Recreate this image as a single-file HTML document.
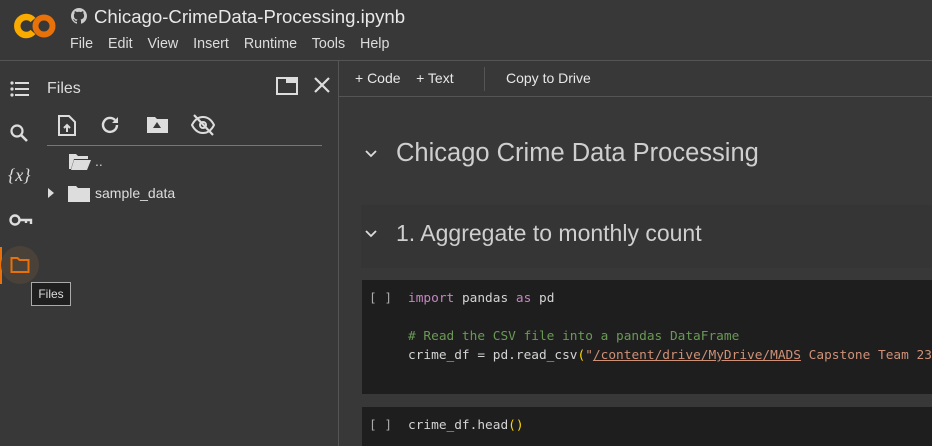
<!DOCTYPE html><html><head><style>
*{margin:0;padding:0;box-sizing:border-box}
body{width:932px;height:446px;overflow:hidden;background:#383838;font-family:"Liberation Sans",sans-serif;color:#e3e3e3;position:relative}
.a{position:absolute}
.mono{font-family:"DejaVu Sans Mono","Liberation Mono",monospace;font-size:12.8px;white-space:pre;color:#d4d4d4}
</style></head><body>
<svg class="a" style="left:13px;top:11px" width="44" height="30" viewBox="0 0 44 30">
<path d="M20 9A9 9 0 1 0 20 21" fill="none" stroke="#f9ab00" stroke-width="6.5"/>
<circle cx="31" cy="15" r="8.5" fill="none" stroke="#e8710a" stroke-width="6"/>
</svg>
<svg class="a" style="left:71px;top:8px" width="16" height="16" viewBox="0 0 16 16"><path fill="#ccc" d="M8 0C3.6 0 0 3.6 0 8c0 3.5 2.3 6.5 5.5 7.6.4.1.5-.2.5-.4v-1.4c-2.2.5-2.7-1-2.7-1-.4-.9-.9-1.2-.9-1.2-.7-.5.1-.5.1-.5.8.1 1.2.8 1.2.8.7 1.3 1.9.9 2.3.7.1-.5.3-.9.5-1.1-1.8-.2-3.6-.9-3.6-4 0-.9.3-1.600.8-2.100-.1-.2-.4-1 .1-2.100 0 0 .7-.2 2.200.8.6-.2 1.300-.3 2-.3s1.400.1 2 .3c1.500-1 2.200-.8 2.200-.8.4 1.100.2 1.900.1 2.100.5.6.8 1.300.8 2.100 0 3.100-1.900 3.700-3.600 4 .3.3.5.8.5 1.500v2.200c0 .2.1.5.6.4C13.700 14.500 16 11.500 16 8c0-4.400-3.600-8-8-8z"/></svg>
<div class="a" style="left:94px;top:6px;font-size:18.6px;color:#e8e8e8">Chicago-CrimeData-Processing.ipynb</div>
<div class="a" style="left:70px;top:36px;font-size:14.3px;color:#ddd;word-spacing:1px">File&nbsp;&nbsp; Edit&nbsp;&nbsp; View&nbsp;&nbsp; Insert&nbsp;&nbsp; Runtime&nbsp;&nbsp; Tools&nbsp;&nbsp; Help</div>
<div class="a" style="left:0;top:60px;width:932px;height:1px;background:#555"></div>
<svg class="a" style="left:10px;top:80px" width="20" height="18" viewBox="0 0 20 18" fill="#ddd"><circle cx="2" cy="3" r="1.6"/><circle cx="2" cy="9" r="1.6"/><circle cx="2" cy="15" r="1.6"/><rect x="5" y="2" width="14" height="2"/><rect x="5" y="8" width="14" height="2"/><rect x="5" y="14" width="14" height="2"/></svg>
<svg class="a" style="left:9px;top:123px" width="20" height="20" viewBox="0 0 20 20"><circle cx="8" cy="8" r="5.5" fill="none" stroke="#ddd" stroke-width="2.2"/><path d="M12 12l6 6" stroke="#ddd" stroke-width="2.6"/></svg>
<div class="a" style="left:8px;top:165px;font-family:'Liberation Serif',serif;font-style:italic;font-size:18px;color:#ddd">{<i>x</i>}</div>
<svg class="a" style="left:9px;top:213px" width="24" height="14" viewBox="0 0 24 14"><circle cx="6" cy="7" r="4.5" fill="none" stroke="#ddd" stroke-width="2.4"/><path d="M10 7h12v4M17 7v3" fill="none" stroke="#ddd" stroke-width="2.4"/></svg>
<div class="a" style="left:0;top:247px;width:2px;height:37px;background:#e8710a"></div>
<div class="a" style="left:1px;top:246px;width:38px;height:38px;border-radius:50%;background:#4a4238"></div>
<svg class="a" style="left:10px;top:256px" width="20" height="18" viewBox="0 0 20 18"><path d="M1.5 2h6l2 2h9v12h-17z" fill="none" stroke="#e8710a" stroke-width="2"/></svg>
<div class="a" style="left:31px;top:282px;width:40px;height:24px;border:1px solid #aaa;background:#1f1f1f;font-size:12px;color:#ddd;text-align:center;line-height:22px">Files</div>
<div class="a" style="left:47px;top:80px;font-size:16px;color:#ddd">Files</div>
<svg class="a" style="left:276px;top:77px" width="22" height="18" viewBox="0 0 22 18"><rect x="1" y="1" width="20" height="16" fill="none" stroke="#ddd" stroke-width="2"/><rect x="10" y="1" width="11" height="5" fill="#ddd"/></svg>
<svg class="a" style="left:314px;top:77px" width="16" height="16" viewBox="0 0 16 16"><path d="M1 1l14 14M15 1L1 15" stroke="#ddd" stroke-width="2.2"/></svg>
<svg class="a" style="left:58px;top:115px" width="18" height="21" viewBox="0 0 18 21"><path d="M1 1h10l6 6v13H1z" fill="none" stroke="#ddd" stroke-width="2"/><path d="M9 17v-6M6 13l3-3 3 3" fill="none" stroke="#ddd" stroke-width="2"/></svg>
<svg class="a" style="left:101px;top:116px" width="20" height="18" viewBox="0 0 20 18"><path d="M16 9a7 7 0 1 1-2-5" fill="none" stroke="#ddd" stroke-width="2.4"/><path d="M17 1v6h-6z" fill="#ddd"/></svg>
<svg class="a" style="left:147px;top:116px" width="21" height="17" viewBox="0 0 21 17"><path d="M0 1h8l2 2h11v14H0z" fill="#ddd"/><path d="M10 6l4 6h-8z" fill="#383838"/></svg>
<svg class="a" style="left:191px;top:114px" width="24" height="22" viewBox="0 0 24 22"><path d="M1 11c3-6 7-8 11-8s8 2 11 8c-3 6-7 8-11 8s-8-2-11-8z" fill="none" stroke="#ddd" stroke-width="2"/><circle cx="12" cy="11" r="3" fill="none" stroke="#ddd" stroke-width="2"/><path d="M3 1l19 20" stroke="#ddd" stroke-width="2.2"/></svg>
<div class="a" style="left:47px;top:145px;width:275px;height:1px;background:#777"></div>
<svg class="a" style="left:68px;top:153px" width="24" height="17" viewBox="0 0 24 17"><path d="M1 1h7l2 2h10v3H6l-3 10H1z" fill="#ddd"/><path d="M6 7h17l-4 10H3z" fill="#ddd"/></svg>
<div class="a" style="left:95px;top:153px;font-size:14px;color:#ccc">..</div>
<svg class="a" style="left:47px;top:187px" width="8" height="12" viewBox="0 0 8 12"><path d="M1 1l6 5-6 5z" fill="#ddd"/></svg>
<svg class="a" style="left:68px;top:185px" width="22" height="17" viewBox="0 0 22 17"><path d="M0 1h8l2 2h12v14H0z" fill="#ddd"/></svg>
<div class="a" style="left:95px;top:185px;font-size:14px;color:#ddd">sample_data</div>
<div class="a" style="left:338px;top:61px;width:1px;height:385px;background:#555"></div>
<div class="a" style="left:355px;top:70px;font-size:14px;color:#e8e8e8">+ Code&nbsp;&nbsp;&nbsp; + Text</div>
<div class="a" style="left:484px;top:67px;width:1px;height:24px;background:#555"></div>
<div class="a" style="left:506px;top:70px;font-size:14px;color:#e8e8e8">Copy to Drive</div>
<div class="a" style="left:339px;top:96px;width:593px;height:1px;background:#555"></div>
<svg class="a" style="left:364px;top:149px" width="14" height="10" viewBox="0 0 14 10"><path d="M2 2l5 5 5-5" fill="none" stroke="#ddd" stroke-width="1.8"/></svg>
<div class="a" style="left:396px;top:139px;font-size:25.5px;color:#cfcfcf">Chicago Crime Data Processing</div>
<div class="a" style="left:361px;top:205px;width:571px;height:63px;background:#353535"></div>
<svg class="a" style="left:364px;top:229px" width="14" height="10" viewBox="0 0 14 10"><path d="M2 2l5 5 5-5" fill="none" stroke="#ddd" stroke-width="1.8"/></svg>
<div class="a" style="left:396px;top:220px;font-size:23px;color:#cfcfcf">1. Aggregate to monthly count</div>
<div class="a" style="left:362px;top:280px;width:570px;height:114px;background:#1e1e1e"></div>
<div class="a mono" style="left:369px;top:291px;color:#aaa">[ ]</div>
<div class="a mono" style="left:408px;top:291px"><span style="color:#c586c0">import</span> pandas <span style="color:#c586c0">as</span> pd</div>
<div class="a mono" style="left:408px;top:329px;color:#6a9955"># Read the CSV file into a pandas DataFrame</div>
<div class="a mono" style="left:408px;top:348px">crime_df = pd.read_csv<span style="color:#ffd700">(</span><span style="color:#ce9178">"<u>/content/drive/MyDrive/MADS</u> Capstone Team 23</span></div>
<div class="a" style="left:362px;top:407px;width:570px;height:39px;background:#1e1e1e"></div>
<div class="a mono" style="left:369px;top:418px;color:#aaa">[ ]</div>
<div class="a mono" style="left:408px;top:418px">crime_df.head<span style="color:#ffd700">()</span></div>
</body></html>
